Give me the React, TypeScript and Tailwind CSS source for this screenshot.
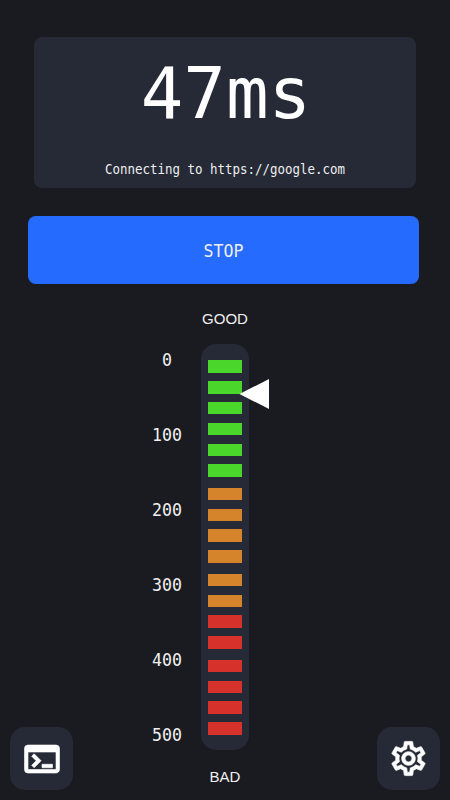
import { useState } from "react";
import { MdOutlineSettings, MdTerminal } from "react-icons/md";

const LABELS = [0, 100, 200, 300, 400, 500];

// Segments of the gauge, from the fastest to the slowest
const GROUPS = [
  ["good", "good", "good", "good", "good", "good"],
  ["fair", "fair", "fair", "fair"],
  ["fair", "fair", "bad", "bad"],
  ["bad", "bad", "bad", "bad"],
];

const COLORS: Record<string, string> = {
  good: "bg-[#4bd62b]",
  fair: "bg-[#d6842b]",
  bad: "bg-[#d6322b]",
};

function Readout({ ping }: { ping: number }) {
  return (
    <section className="mt-[37px] ml-[34px] flex h-[151px] w-[382px] flex-col items-center rounded-lg bg-[#262a36]">
      <p className="mt-[21px] pl-[2px] text-[70.8px] leading-[72px] text-white">{ping}ms</p>
      <p className="mt-[31px] scale-y-108 text-[12.46px] leading-[18px] text-[#eeeeee]">
        Connecting to https://google.com
      </p>
    </section>
  );
}

function Gauge({ ping }: { ping: number }) {
  return (
    <div className="mt-[15px] flex h-[406px]">
      <div className="-mt-[21px] ml-[145px] flex w-[44px] flex-col text-center text-[16.6px] text-[#f0f0f0]">
        {LABELS.map((label) => (
          <span key={label} className="h-[75px] scale-y-105 leading-[75px]">
            {label}
          </span>
        ))}
      </div>
      <div className="relative ml-[12px] flex w-[48px] flex-col items-center justify-between rounded-[15px] bg-[#262a36] pt-[16px] pb-[15px]">
        {GROUPS.map((group, i) => (
          <div key={i} className="flex flex-col gap-[8.2px]">
            {group.map((level, j) => (
              <span key={j} className={`h-[12.7px] w-[34px] ${COLORS[level]}`} />
            ))}
          </div>
        ))}
        <svg
          className="absolute left-[38px] h-[30px] w-[30px]"
          style={{ top: ping * 0.75 - 0.75 }}
          viewBox="0 0 30 30"
          fill="#fff"
        >
          <path d="M0.5 15L30 0V30Z" />
        </svg>
      </div>
    </div>
  );
}

export default function App() {
  const [running, setRunning] = useState(true);
  const ping = 47;

  return (
    <main className="relative flex h-[800px] w-[450px] flex-col overflow-hidden bg-[#1a1b20] font-['DejaVu_Sans_Mono',monospace]">
      <Readout ping={ping} />
      <button
        onClick={() => setRunning(!running)}
        className="mt-[28px] ml-[28px] h-[68px] w-[391px] shrink-0 rounded-lg bg-[#246bfe] pt-[4px] text-[16.6px] text-[#eeeeee]"
      >
        <span className="inline-block scale-y-105">{running ? "STOP" : "START"}</span>
      </button>
      <p className="mt-[25px] text-center font-['Liberation_Sans',sans-serif] text-[15px] leading-[20px] text-[#f0f0f0]">
        GOOD
      </p>
      <Gauge ping={ping} />
      <p className="mt-[17px] text-center font-['Liberation_Sans',sans-serif] text-[15px] leading-[20px] text-[#f0f0f0]">
        BAD
      </p>
      <button
        aria-label="Console"
        className="absolute top-[727px] left-[10px] flex size-[63px] items-center justify-center rounded-[15px] bg-[#262a36] pl-px text-white"
      >
        <MdTerminal
          size={42}
          className="[&>path:last-child]:[stroke-width:0.35]"
        />
      </button>
      <button
        aria-label="Settings"
        className="absolute top-[727px] left-[377px] flex size-[63px] items-center justify-center rounded-[15px] bg-[#262a36] text-white"
      >
        <MdOutlineSettings
          size={41}
          className="[&>path:last-child]:[stroke-width:0.4]"
        />
      </button>
    </main>
  );
}
